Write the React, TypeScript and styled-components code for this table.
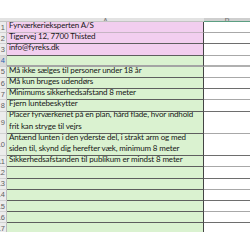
import React from 'react';
import styled, { createGlobalStyle } from 'styled-components';

const ROW_H = 11.2;

const Global = createGlobalStyle`
    html, body {
        margin: 0;
        padding: 0;
        background: #ffffff;
    }
    body {
        font-family: Lato, 'Liberation Sans', sans-serif;
    }
`;

const Page = styled.div`
    width: 250px;
    height: 250px;
    padding-top: 18px;
    box-sizing: border-box;
    overflow: hidden;
`;

const Sheet = styled.div`
    height: 214px;
    overflow: hidden;
`;

const Grid = styled.div`
    display: grid;
    grid-template-columns: 7px 197px 46px;
`;

const HeadCell = styled.div<{ active?: boolean }>`
    height: 3px;
    overflow: hidden;
    display: flex;
    align-items: flex-end;
    justify-content: center;
    background-color: ${(p) => (p.active ? '#cfcfcf' : '#e3e3e3')};
    border-bottom: 1px solid ${(p) => (p.active ? '#5c9f82' : '#c4c4c4')};
    font-size: 8px;
    line-height: 8px;
    color: #777;
    span {
        margin-bottom: -4px;
    }
`;

const RowHead = styled.div<{ lines: number; active?: boolean }>`
    height: ${(p) => p.lines * ROW_H}px;
    box-sizing: border-box;
    overflow: hidden;
    display: flex;
    align-items: center;
    justify-content: flex-end;
    padding-right: 1px;
    background-color: ${(p) => (p.active ? '#d9d9d9' : '#ececec')};
    border-right: 1px solid #bdbdbd;
    border-bottom: 1px solid #d2d2d2;
    font-family: 'Liberation Sans', sans-serif;
    font-size: 7.5px;
    color: ${(p) => (p.active ? '#2a64b0' : '#5f5f5f')};
    white-space: nowrap;
`;

const Cell = styled.div<{ lines: number; fill: 'pink' | 'green'; soft?: boolean; thick?: boolean }>`
    height: ${(p) => p.lines * ROW_H}px;
    box-sizing: border-box;
    padding: 0 0 1px 2px;
    display: flex;
    flex-direction: column;
    justify-content: flex-end;
    background-color: ${(p) => (p.fill === 'pink' ? '#f2ceef' : '#daf2d0')};
    border-right: 1px solid #444444;
    border-bottom: ${(p) => (p.thick ? '2px solid #a4a4a4' : `1px solid ${p.soft ? '#c6b4c3' : '#5e5e5e'}`)};
    font-size: 8px;
    letter-spacing: -0.13px;
    line-height: ${ROW_H}px;
    color: #161616;
    white-space: nowrap;
    overflow: hidden;
`;

const EmptyCell = styled.div<{ lines: number; dark?: boolean; thick?: boolean }>`
    height: ${(p) => p.lines * ROW_H}px;
    box-sizing: border-box;
    background-color: #ffffff;
    border-bottom: ${(p) => (p.thick ? '2px solid #b0b0b0' : `1px solid ${p.dark ? '#6e6e6e' : '#a8a8a8'}`)};
`;

type Row = {
    text: string[];
    fill: 'pink' | 'green';
};

const rows: Row[] = [
    { text: ['Fyrværkerieksperten A/S'], fill: 'pink' },
    { text: ['Tigervej 12, 7700 Thisted'], fill: 'pink' },
    { text: ['info@fyreks.dk'], fill: 'pink' },
    { text: [], fill: 'green' },
    { text: ['Må ikke sælges til personer under 18 år'], fill: 'green' },
    { text: ['Må kun bruges udendørs'], fill: 'green' },
    { text: ['Minimums sikkerhedsafstand 8 meter'], fill: 'green' },
    { text: ['Fjern luntebeskytter'], fill: 'green' },
    {
        text: ['Placer fyrværkeriet på en plan, hård flade, hvor indhold', 'frit kan stryge til vejrs'],
        fill: 'green',
    },
    {
        text: ['Antænd lunten i den yderste del, i strakt arm og med', 'siden til, skynd dig herefter væk, minimum 8 meter'],
        fill: 'green',
    },
    { text: ['Sikkerhedsafstanden til publikum er mindst 8 meter'], fill: 'green' },
    { text: [], fill: 'green' },
    { text: [], fill: 'green' },
    { text: [], fill: 'green' },
    { text: [], fill: 'green' },
    { text: [], fill: 'green' },
    { text: [], fill: 'green' },
];

const App: React.FC = () => {
    return (
        <Page>
            <Global />
            <Sheet>
                <Grid>
                    <HeadCell />
                    <HeadCell>
                        <span>A</span>
                    </HeadCell>
                    <HeadCell active>
                        <span>B</span>
                    </HeadCell>
                    {rows.map((row, i) => {
                        const lines = Math.max(1, row.text.length);
                        return (
                            <React.Fragment key={i}>
                                <RowHead lines={lines} active={i === 3}>
                                    {i + 1}
                                </RowHead>
                                <Cell lines={lines} fill={row.fill} soft={i === 0} thick={i === 3}>
                                    {row.text.map((line) => (
                                        <div key={line}>{line}</div>
                                    ))}
                                </Cell>
                                <EmptyCell lines={lines} dark={i % 2 === 1} thick={i === 3} />
                            </React.Fragment>
                        );
                    })}
                </Grid>
            </Sheet>
        </Page>
    );
};

export default App;
